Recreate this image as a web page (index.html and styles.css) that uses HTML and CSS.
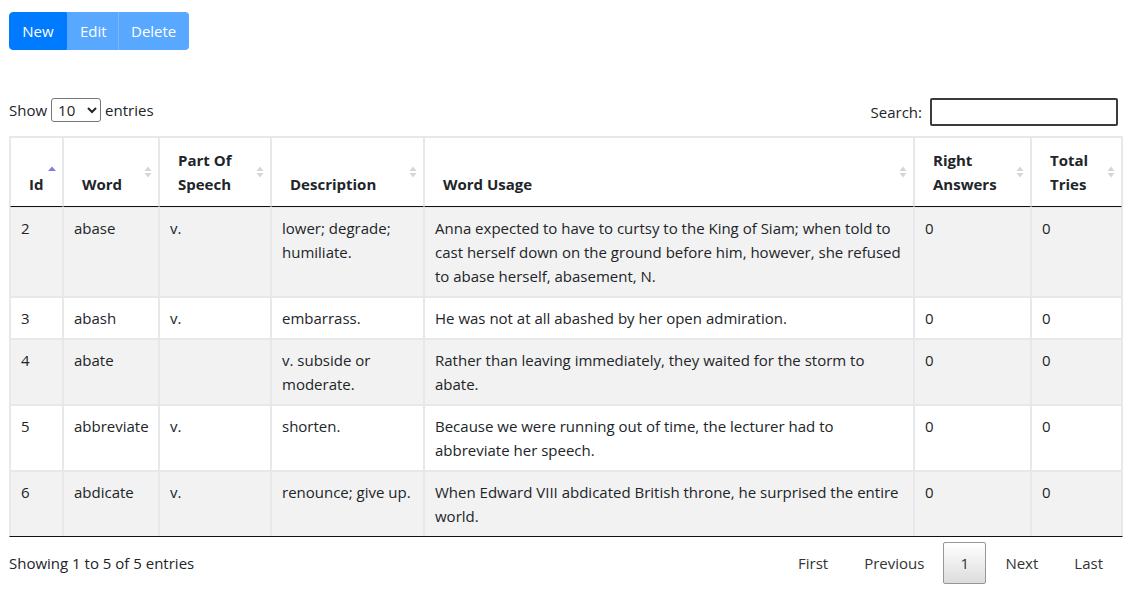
FILE: index.html
```html
<!DOCTYPE html>
<html>
<head>
<meta charset="utf-8">
<link rel="stylesheet" href="styles.css">
</head>
<body>
<div class="page">
  <div class="btn-group">
    <button class="btn btn-primary">New</button>
    <button class="btn btn-primary disabled">Edit</button>
    <button class="btn btn-primary disabled">Delete</button>
  </div>

  <div class="dt-top">
    <label class="dt-length">Show
      <select class="dt-select"><option>10</option><option>25</option></select>
      entries</label>
    <label class="dt-search">Search: <input type="search" class="dt-input"></label>
  </div>

  <table class="dt-table">
    <colgroup>
      <col style="width:53px"><col style="width:96px"><col style="width:112px"><col style="width:153px"><col style="width:490px"><col style="width:117px"><col style="width:91px">
    </colgroup>
    <thead>
      <tr>
        <th>Id<span class="sort"><svg width="10" height="14" viewBox="0 0 10 14"><path d="M1 6 L5 1.5 L9 6 Z" fill="#7f7fdf"/></svg></span></th>
        <th>Word<span class="sort"><svg width="10" height="14" viewBox="0 0 10 14"><path d="M1.5 6 L5 1.5 L8.5 6 Z M1.5 8 L8.5 8 L5 12.5 Z" fill="#d6d6d6"/></svg></span></th>
        <th>Part Of Speech<span class="sort"><svg width="10" height="14" viewBox="0 0 10 14"><path d="M1.5 6 L5 1.5 L8.5 6 Z M1.5 8 L8.5 8 L5 12.5 Z" fill="#d6d6d6"/></svg></span></th>
        <th>Description<span class="sort"><svg width="10" height="14" viewBox="0 0 10 14"><path d="M1.5 6 L5 1.5 L8.5 6 Z M1.5 8 L8.5 8 L5 12.5 Z" fill="#d6d6d6"/></svg></span></th>
        <th>Word Usage<span class="sort"><svg width="10" height="14" viewBox="0 0 10 14"><path d="M1.5 6 L5 1.5 L8.5 6 Z M1.5 8 L8.5 8 L5 12.5 Z" fill="#d6d6d6"/></svg></span></th>
        <th>Right Answers<span class="sort"><svg width="10" height="14" viewBox="0 0 10 14"><path d="M1.5 6 L5 1.5 L8.5 6 Z M1.5 8 L8.5 8 L5 12.5 Z" fill="#d6d6d6"/></svg></span></th>
        <th>Total Tries<span class="sort"><svg width="10" height="14" viewBox="0 0 10 14"><path d="M1.5 6 L5 1.5 L8.5 6 Z M1.5 8 L8.5 8 L5 12.5 Z" fill="#d6d6d6"/></svg></span></th>
      </tr>
    </thead>
    <tbody>
      <tr class="odd">
        <td>2</td><td>abase</td><td>v.</td><td>lower; degrade; humiliate.</td>
        <td>Anna expected to have to curtsy to the King of Siam; when told to cast herself down on the ground before him, however, she refused to abase herself, abasement, N.</td>
        <td>0</td><td>0</td>
      </tr>
      <tr>
        <td>3</td><td>abash</td><td>v.</td><td>embarrass.</td>
        <td>He was not at all abashed by her open admiration.</td>
        <td>0</td><td>0</td>
      </tr>
      <tr class="odd">
        <td>4</td><td>abate</td><td></td><td>v. subside or moderate.</td>
        <td>Rather than leaving immediately, they waited for the storm to abate.</td>
        <td>0</td><td>0</td>
      </tr>
      <tr>
        <td>5</td><td>abbreviate</td><td>v.</td><td>shorten.</td>
        <td>Because we were running out of time, the lecturer had to abbreviate her speech.</td>
        <td>0</td><td>0</td>
      </tr>
      <tr class="odd">
        <td>6</td><td>abdicate</td><td>v.</td><td>renounce; give up.</td>
        <td>When Edward VIII abdicated British throne, he surprised the entire world.</td>
        <td>0</td><td>0</td>
      </tr>
    </tbody>
  </table>

  <div class="dt-bottom">
    <div class="dt-info">Showing 1 to 5 of 5 entries</div>
    <div class="dt-paginate">
      <a class="pg">First</a>
      <a class="pg">Previous</a>
      <a class="pg current">1</a>
      <a class="pg">Next</a>
      <a class="pg">Last</a>
    </div>
  </div>
</div>
</body>
</html>
```

FILE: styles.css
```css
html, body {
  margin: 0;
  padding: 0;
  background: #fff;
}
body {
  font-family: "Open Sans", "Noto Sans", "Liberation Sans", sans-serif;
  font-size: 15px;
  line-height: 24px;
  color: #212529;
}
.page {
  padding: 12px 13px 0 9px;
}
.btn-group {
  display: flex;
  width: max-content;
  height: 38px;
}
.btn {
  font-family: inherit;
  font-size: 15px;
  line-height: 24px;
  padding: 6px 12px;
  border: 1px solid #007bff;
  background: #007bff;
  color: #fff;
  margin: 0;
}
.btn:first-child {
  border-radius: 4px 0 0 4px;
  width: 58px;
}
.btn:nth-child(2) { width: 51px; }
.btn:last-child {
  border-radius: 0 4px 4px 0;
  width: 71px;
}
.btn.disabled {
  opacity: 0.65;
}
.btn.disabled + .btn.disabled {
  border-left-color: #3391ff;
}
.dt-top {
  display: flex;
  justify-content: space-between;
  align-items: flex-start;
  margin-top: 48px;
  height: 28px;
}
.dt-length {
  display: flex;
  align-items: center;
  gap: 4px;
  height: 24px;
}
.dt-select {
  font-family: inherit;
  font-size: 15px;
  width: 50px;
  height: 24px;
  padding: 0 2px;
  border: 1px solid #767676;
  border-radius: 3px;
  background: #fff;
  color: #212529;
}
.dt-search {
  display: flex;
  align-items: center;
  gap: 8px;
  height: 28px;
}
.dt-input {
  width: 188px;
  height: 28px;
  box-sizing: border-box;
  border: 2px solid #3b3b3b;
  border-radius: 2px;
  margin: 0 3px 0 0;
}
.dt-table {
  margin-top: 10px;
  width: 1112px;
  table-layout: fixed;
  border-collapse: separate;
  border-spacing: 0;
  border: 1px solid #e6e8eb;
  border-bottom: 1px solid #111;
}
.dt-table th {
  position: relative;
  text-align: left;
  vertical-align: bottom;
  font-weight: 700;
  padding: 10px 18px;
  border: 1px solid #e6e8eb;
  border-bottom: 1px solid #111;
  height: 48px;
}
.dt-table td {
  vertical-align: top;
  padding: 8px 10px;
  border: 1px solid #e6e8eb;
}
.dt-table tbody tr:last-child td {
  border-bottom: 0;
}
.dt-table tr.odd td {
  background: #f2f2f2;
}
.sort {
  position: absolute;
  right: 5px;
  top: 50%;
  margin-top: -7px;
  width: 10px;
  height: 14px;
  display: block;
}
.sort svg { display: block; }
.dt-bottom {
  display: flex;
  justify-content: space-between;
  align-items: flex-start;
}
.dt-info {
  padding-top: 14px;
}
.dt-paginate {
  display: flex;
  padding-top: 5px;
  margin-right: 1px;
}
.pg {
  box-sizing: border-box;
  padding: 8px 16px;
  margin-left: 2px;
  border: 1px solid transparent;
  border-radius: 2px;
  color: #333;
  line-height: 24px;
  font-size: 15px;
  cursor: pointer;
}
.pg.current {
  border: 1px solid #979797;
  background: linear-gradient(to bottom, #fff 0%, #dcdcdc 100%);
  min-width: 43px;
  text-align: center;
}
```
